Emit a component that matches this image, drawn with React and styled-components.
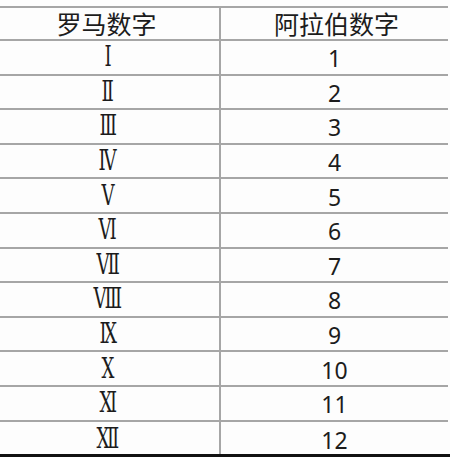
import styled, { createGlobalStyle } from "styled-components";

// 罗马数字 / 阿拉伯数字 对照表
const rows = [
    ["Ⅰ", "1"],
    ["Ⅱ", "2"],
    ["Ⅲ", "3"],
    ["Ⅳ", "4"],
    ["Ⅴ", "5"],
    ["Ⅵ", "6"],
    ["Ⅶ", "7"],
    ["Ⅷ", "8"],
    ["Ⅸ", "9"],
    ["Ⅹ", "10"],
    ["Ⅺ", "11"],
    ["Ⅻ", "12"],
];

const GlobalStyle = createGlobalStyle`
    html, body {
        margin: 0;
        padding: 0;
        background: #fdfdfd;
    }
`;

const App = () => {
    return (
        <>
            <GlobalStyle />
            <Frame>
                <Table>
                    <HeadCell $left>罗马数字</HeadCell>
                    <HeadCell>阿拉伯数字</HeadCell>
                    {rows.map(([roman, arabic], i) => (
                        <Row key={arabic} $last={i === rows.length - 1}>
                            <RomanCell>
                                <Roman>{roman}</Roman>
                            </RomanCell>
                            <ArabicCell>{arabic}</ArabicCell>
                        </Row>
                    ))}
                </Table>
            </Frame>
        </>
    );
};

const Frame = styled.div`
    width: 450px;
    height: 457px;
    box-sizing: border-box;
    padding-top: 6px;
    border-bottom: 3px solid #111;
    background: #fdfdfd;
    overflow: hidden;
`;

const Table = styled.div`
    width: 448px;
    display: grid;
    grid-template-columns: 221px 227px;
    grid-template-rows: 33px repeat(12, 34.6px);
    border-top: 2px solid #a6a6a6;
    color: #1c1c1c;
`;

const HeadCell = styled.div`
    display: flex;
    align-items: center;
    justify-content: center;
    border-bottom: 2px solid #a6a6a6;
    border-right: ${(p) => (p.$left ? "2px solid #a6a6a6" : "none")};
    font-family: "Noto Sans CJK SC", "Noto Sans", sans-serif;
    font-size: 25px;
    line-height: 1;
    padding-left: ${(p) => (p.$left ? "0" : "4px")};
    padding-right: ${(p) => (p.$left ? "6px" : "0")};
`;

const Row = styled.div`
    display: contents;
    & > div {
        border-bottom: ${(p) => (p.$last ? "none" : "2px solid #a6a6a6")};
    }
`;

const RomanCell = styled.div`
    display: flex;
    align-items: center;
    justify-content: center;
    border-right: 2px solid #a6a6a6;
    padding-right: 3px;
`;

const Roman = styled.span`
    display: inline-block;
    font-family: "DejaVu Serif Condensed", "DejaVu Serif", serif;
    font-size: 28px;
    line-height: 1;
    transform: scaleX(0.72);
`;

const ArabicCell = styled.div`
    display: flex;
    align-items: center;
    justify-content: center;
    padding-top: 3px;
    font-family: "Noto Sans", "DejaVu Sans", sans-serif;
    font-size: 23px;
    line-height: 1;
`;

export default App;
